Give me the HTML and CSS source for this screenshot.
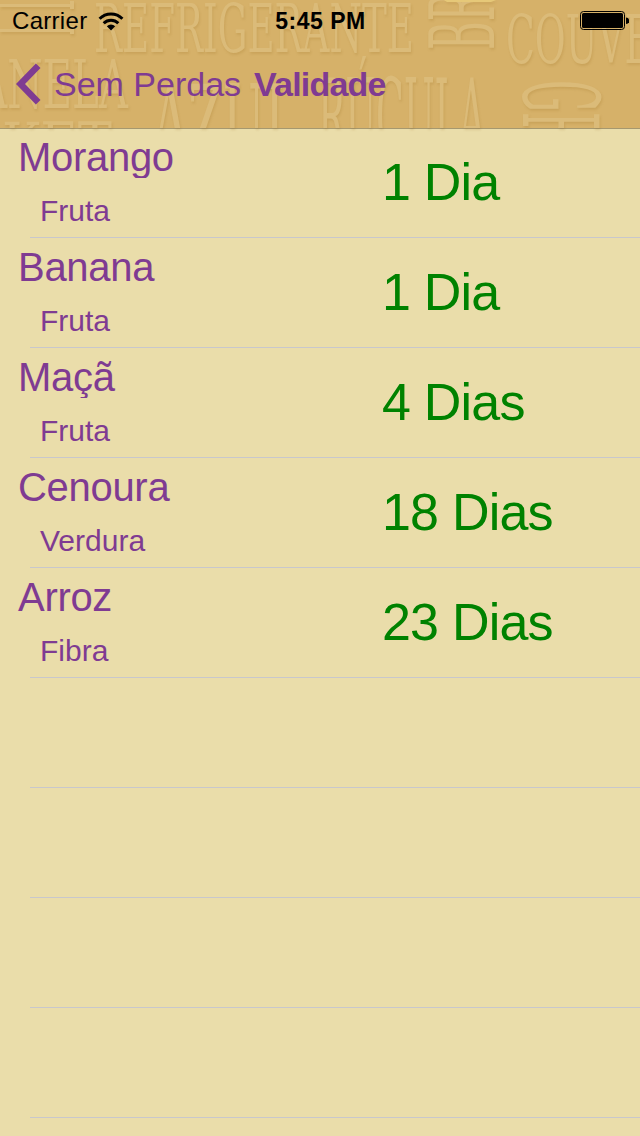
FILE: index.html
```
<!DOCTYPE html>
<html lang="pt-BR">
<head>
  <meta charset="UTF-8">
  <title>Validade</title>
  <meta name="viewport" content="width=device-width, initial-scale=1.0">
  <link rel="stylesheet" href="styles.css">
</head>
<body>

  <header class="header">
    <!-- embossed food words behind the bar -->
    <svg class="pattern" width="640" height="128" viewBox="0 0 640 128" aria-hidden="true">
      <text x="94" y="52" font-size="68" textLength="320" lengthAdjust="spacingAndGlyphs">REFRIGERANTE</text>
      <text x="506" y="63" font-size="68" textLength="146" lengthAdjust="spacingAndGlyphs">COUVE</text>
      <text x="-22" y="108" font-size="67" textLength="150" lengthAdjust="spacingAndGlyphs">ANELA</text>
      <text x="152" y="160" font-size="104" textLength="146" lengthAdjust="spacingAndGlyphs">AZUL</text>
      <text x="318" y="154" font-size="104" textLength="167" lengthAdjust="spacingAndGlyphs">RÚCULA</text>
      <text x="2" y="168" font-size="64" textLength="110" lengthAdjust="spacingAndGlyphs">KET</text>
      <text transform="translate(494 50) rotate(-90)" font-size="90" textLength="58" lengthAdjust="spacingAndGlyphs">BR</text>
      <text transform="translate(523 80) rotate(90)" font-size="104" textLength="62" lengthAdjust="spacingAndGlyphs">GR</text>
      <path d="M0 4h70v-3h4v8h-4v-2H0zM0 29h70v-3h4v8h-4v-2H0z"/>
      <path class="label-edge" d="M444 0h52l-5 2h-44z"/>
    </svg>

    <div class="status-bar">
      <div class="carrier">
        <span>Carrier</span>
        <svg width="26" height="19" viewBox="0 0 26 19">
          <g fill="none" stroke="#000" stroke-width="3">
            <path d="M1.600 6.700a16.200 16.200 0 0 1 22.800 0"/>
            <path d="M5.700 11.200a10.400 10.400 0 0 1 14.600 0"/>
          </g>
          <path d="M13 18.500l-4.200-4.200a6 6 0 0 1 8.400 0z"/>
        </svg>
      </div>
      <span class="time">5:45 PM</span>
      <svg class="battery" width="49" height="20" viewBox="0 0 49 20">
        <rect x="0.500" y="0.500" width="44" height="18" rx="3" fill="none" stroke="#000"/>
        <rect x="2" y="2" width="41" height="15" rx="1.500"/>
        <path d="M46 6.500a3.200 3.200 0 0 1 0 6.500z"/>
      </svg>
    </div>

    <nav class="nav-bar">
      <svg width="26" height="42" viewBox="0 0 26 42">
        <path d="M22.200 2.800L4.500 21l17.700 18.200" fill="none" stroke="#7f3b92" stroke-width="6.500"/>
      </svg>
      <span class="back">Sem Perdas</span>
      <h1 class="title">Validade</h1>
    </nav>
  </header>

  <ul class="list">
    <li class="row">
      <div class="info">
        <div class="name">Morango</div>
        <div class="type">Fruta</div>
      </div>
      <div class="days">1 Dia</div>
    </li>
    <li class="row">
      <div class="info">
        <div class="name">Banana</div>
        <div class="type">Fruta</div>
      </div>
      <div class="days">1 Dia</div>
    </li>
    <li class="row">
      <div class="info">
        <div class="name">Maçã</div>
        <div class="type">Fruta</div>
      </div>
      <div class="days">4 Dias</div>
    </li>
    <li class="row">
      <div class="info">
        <div class="name">Cenoura</div>
        <div class="type">Verdura</div>
      </div>
      <div class="days">18 Dias</div>
    </li>
    <li class="row">
      <div class="info">
        <div class="name">Arroz</div>
        <div class="type">Fibra</div>
      </div>
      <div class="days">23 Dias</div>
    </li>
    <li class="row"></li>
    <li class="row"></li>
    <li class="row"></li>
    <li class="row"></li>
  </ul>

</body>
</html>
```
FILE: styles.css
```
* {
  box-sizing: border-box;
}

body {
  margin: 0;
  height: 1136px;
  overflow: hidden;
  background-color: #eaddaa;
  font-family: "Liberation Sans", Arial, sans-serif;
  color: #7f3b92;
}

.header {
  position: relative;
  height: 129px;
  background-color: #d6b169;
  border-bottom: 1px solid #a6986f;
}

.pattern {
  position: absolute;
  top: 0;
  left: 0;
  fill: #dbbb79;
  font-family: "DejaVu Serif", serif;
  filter: drop-shadow(1px 2px 1px rgba(150, 105, 30, 0.18));
}

.label-edge {
  fill: #e6c878;
}

.status-bar {
  position: relative;
  display: grid;
  grid-template-columns: 1fr auto 1fr;
  align-items: center;
  height: 42px;
  padding: 0 11px 0 12px;
  font-size: 24px;
  color: #000;
}

.carrier {
  display: flex;
  align-items: center;
  gap: 11px;
  letter-spacing: 0.3px;
}

.time {
  font-weight: bold;
  font-size: 23px;
  letter-spacing: 0.5px;
}

.battery {
  justify-self: end;
}

.nav-bar {
  position: relative;
  display: flex;
  align-items: center;
  height: 84px;
  padding-left: 16px;
}

.back {
  margin-left: 12px;
  font-size: 34px;
}

.title {
  margin: 0 0 0 13px;
  font-size: 34px;
  letter-spacing: -0.8px;
}

.list {
  margin: 0;
  padding: 0;
  list-style: none;
}

.row {
  display: flex;
  height: 110px;
  /* separator starts 30px in */
  background: linear-gradient(#c8c7cc, #c8c7cc) 30px 108px / 610px 1px no-repeat;
}

.info {
  width: 382px;
}

.name {
  height: 49px;
  padding: 5px 0 0 18px;
  font-size: 40px;
  line-height: 46px;
  letter-spacing: -0.3px;
  overflow: hidden;
}

.type {
  padding-left: 40px;
  font-size: 30px;
  line-height: 66px;
}

.days {
  font-size: 52px;
  line-height: 106px;
  letter-spacing: -0.8px;
  color: #008200;
}
```
